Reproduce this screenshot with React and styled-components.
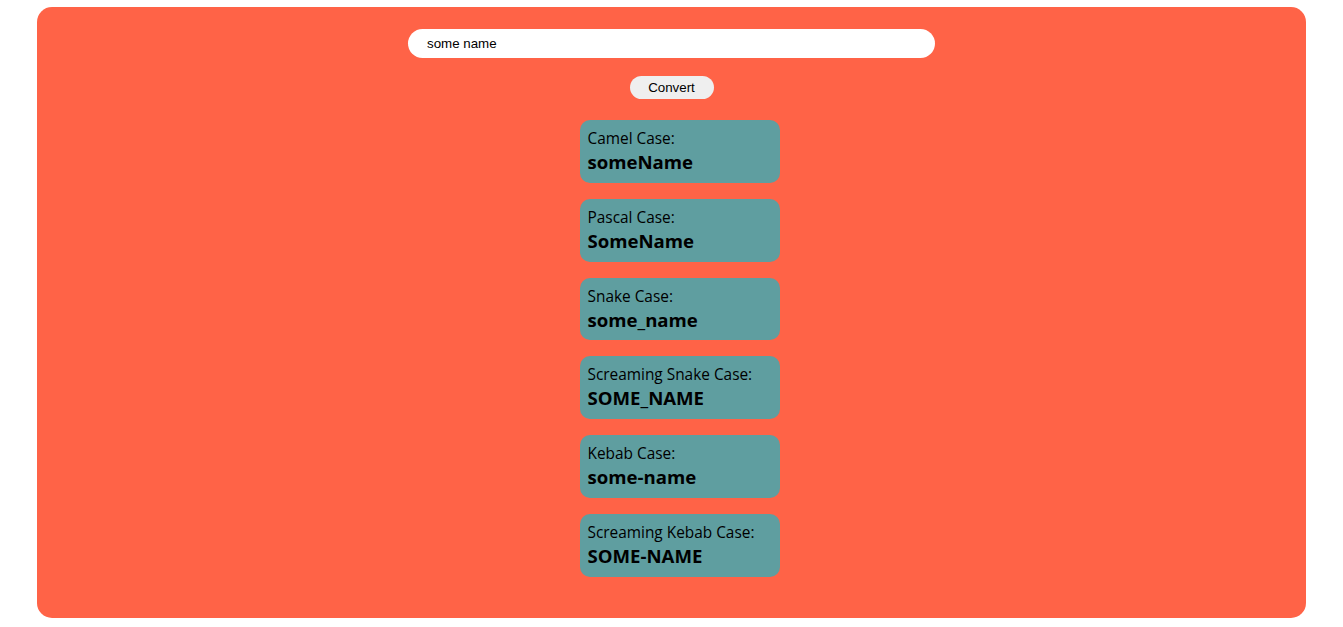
import React, { useState } from "react";
import styled, { createGlobalStyle } from "styled-components";

const GlobalStyle = createGlobalStyle`
  body {
    margin: 0;
    background: #fff;
    font-family: "Segoe UI", "Open Sans", sans-serif;
  }
`

const Page = styled.div`
  padding: 7px 37px 9px;
`

const Container = styled.div`
  display: flex;
  flex-direction: column;
  align-items: center;
  background: #ff6347;
  border-radius: 15px;
  padding: 22px 0 41px;
`

const NameInput = styled.input`
  box-sizing: border-box;
  width: 527px;
  height: 29px;
  border: none;
  border-radius: 15px;
  padding: 0 19px;
  font-family: Arial, "Liberation Sans", sans-serif;
  font-size: 13.33px;
  color: #000;
  outline: none;
`

const ConvertButton = styled.button`
  margin-top: 18px;
  width: 84px;
  height: 23px;
  border: none;
  border-radius: 12px;
  background: #efefef;
  font-family: Arial, "Liberation Sans", sans-serif;
  font-size: 13.33px;
  color: #000;
`

const Results = styled.div`
  display: flex;
  flex-direction: column;
  gap: 16px;
  margin-top: 21px;
  margin-left: 16px;
`

const Card = styled.div`
  box-sizing: border-box;
  width: 200px;
  height: 62.8px;
  padding: 9px 8px 0;
  background: #5f9ea0;
  border-radius: 10px;
  color: #000;

  p {
    margin: 0;
    font-size: 15.4px;
    line-height: 20px;
  }

  h3 {
    margin: 2px 0 0;
    font-size: 18.6px;
    line-height: 22px;
    font-weight: 700;
  }
`

const splitWords = (str) => str.trim().split(/[\s_-]+/).filter(Boolean).map(w => w.toLowerCase())

const cap = (w) => w.charAt(0).toUpperCase() + w.slice(1)

const App = () => {
  const [name, setName] = useState("some name")
  const words = splitWords(name)

  const cases = [
    { label: "Camel Case:", value: words.map((w, i) => i === 0 ? w : cap(w)).join("") },
    { label: "Pascal Case:", value: words.map(cap).join("") },
    { label: "Snake Case:", value: words.join("_") },
    { label: "Screaming Snake Case:", value: words.join("_").toUpperCase() },
    { label: "Kebab Case:", value: words.join("-") },
    { label: "Screaming Kebab Case:", value: words.join("-").toUpperCase() },
  ]

  return (
    <Page>
      <GlobalStyle />
      <Container>
        <NameInput value={name} onChange={e => setName(e.target.value)} />
        <ConvertButton>Convert</ConvertButton>
        <Results>
          {cases.map(c => (
            <Card key={c.label}>
              <p>{c.label}</p>
              <h3>{c.value}</h3>
            </Card>
          ))}
        </Results>
      </Container>
    </Page>
  )
}

export default App
